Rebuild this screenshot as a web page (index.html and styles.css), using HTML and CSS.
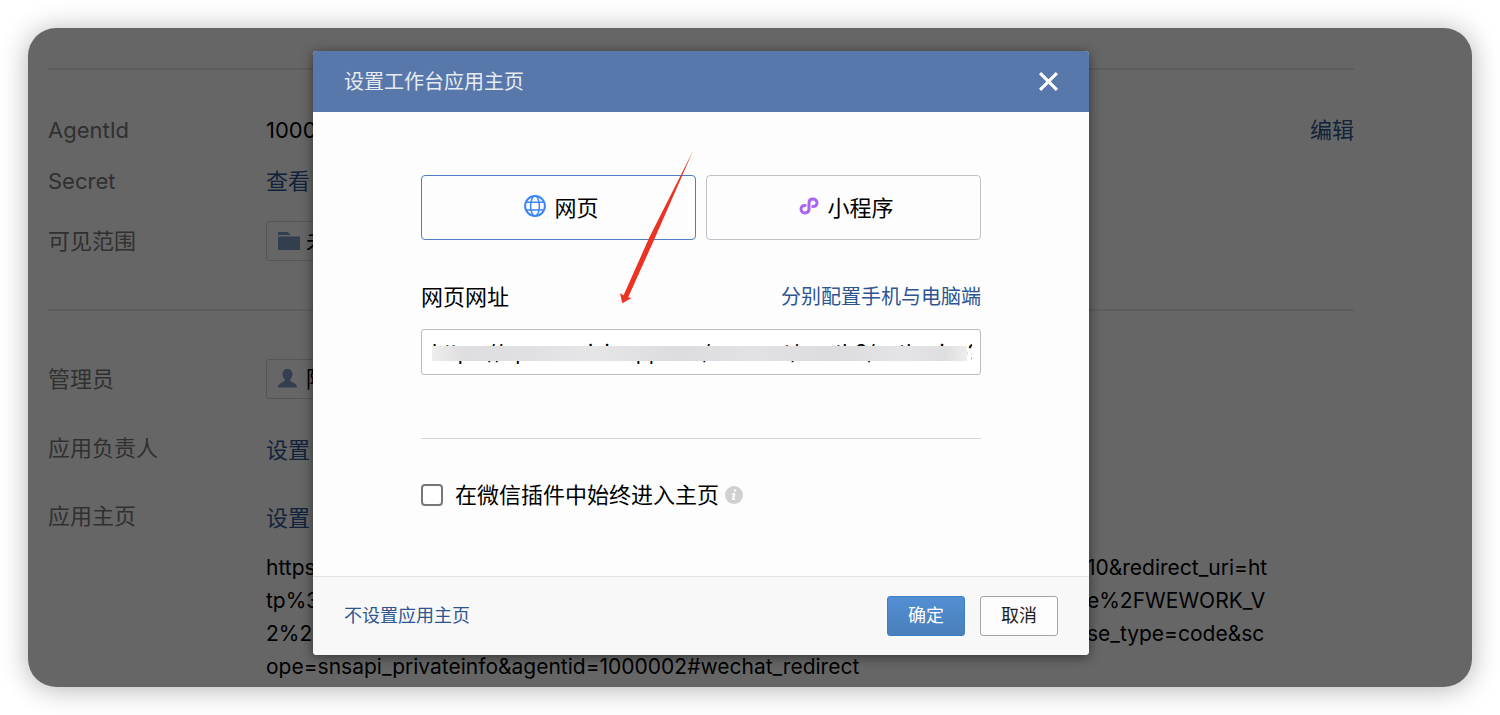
FILE: index.html
```html
<!DOCTYPE html>
<html lang="zh-CN">
<head>
<meta charset="utf-8">
<title>设置工作台应用主页</title>
<link rel="stylesheet" href="styles.css">
</head>
<body>
<div class="window">
  <main class="page">
    <section class="section section-basic">
      <div class="row">
        <span class="label">AgentId</span>
        <span class="value">1000002</span>
        <a class="link" href="#edit">编辑</a>
      </div>
      <div class="row row-secret">
        <span class="label">Secret</span>
        <a class="link" href="#secret">查看</a>
      </div>
      <div class="row row-scope">
        <span class="label">可见范围</span>
        <span class="chip">
          <svg class="chip-icon" viewBox="0 0 24 24" aria-hidden="true"><path d="M1 3h10l2.500 3H1zM1 7.500h22V21H1z"/></svg>
          未
        </span>
      </div>
    </section>
    <section class="section section-admin">
      <div class="row">
        <span class="label">管理员</span>
        <span class="chip">
          <svg class="chip-icon" viewBox="0 0 24 24" aria-hidden="true"><path d="M10.500 2c3 0 5 2 5 5 0 2-.8 3.800-2 5.200-.5.600-.3 1.800.5 2.200 2.500 1.200 6 2 6 6.100H1c0-4.100 3.500-4.900 6-6.100.8-.4 1-1.600.5-2.200-1.200-1.400-2-3.200-2-5.200 0-3 2-5 5-5z"/></svg>
          陈
        </span>
      </div>
      <div class="row row-owner">
        <span class="label">应用负责人</span>
        <a class="link" href="#owner">设置</a>
      </div>
      <div class="row row-home">
        <span class="label">应用主页</span>
        <a class="link" href="#home">设置</a>
      </div>
      <div class="url">
        <div class="url-line"><span>https</span><span>10&amp;redirect_uri=ht</span></div>
        <div class="url-line"><span>tp%3</span><span>e%2FWEWORK_V</span></div>
        <div class="url-line"><span>2%2</span><span>se_type=code&amp;sc</span></div>
        <div class="url-line"><span>ope=snsapi_privateinfo&amp;agentid=1000002#wechat_redirect</span></div>
      </div>
    </section>
  </main>

  <div class="mask">
    <div class="dialog" role="dialog" aria-labelledby="dialog-title">
      <header class="dialog-head">
        <h1 class="dialog-title" id="dialog-title">设置工作台应用主页</h1>
        <button class="close" type="button" aria-label="关闭">
          <svg viewBox="0 0 20 20" aria-hidden="true"><path d="M2 2l16 16M18 2L2 18"/></svg>
        </button>
      </header>
      <div class="dialog-body">
        <div class="choices">
          <button class="choice choice-active" type="button">
            <svg class="choice-icon icon-globe" viewBox="0 0 22 22" aria-hidden="true"><circle cx="11" cy="11" r="9.900" stroke-width="2"/><ellipse cx="11" cy="11" rx="4.400" ry="9.900"/><path d="M2 7.300h18M2 14.900h18"/></svg>
            网页
          </button>
          <button class="choice" type="button">
            <svg class="choice-icon icon-mini" viewBox="0 0 20 20" aria-hidden="true"><path d="M6.200 9.400C3.600 9.200 2 11 2 13.200c0 2.100 1.600 3.700 4 3.700 2.300 0 4-1.500 4-3.900V7c0-2.400 1.700-3.900 4-3.900 2.400 0 4 1.600 4 3.700 0 2.200-1.600 3.900-4.200 3.800"/></svg>
            小程序
          </button>
        </div>
        <div class="field-head">
          <label for="home-url">网页网址</label>
          <a class="split-link" href="#split">分别配置手机与电脑端</a>
        </div>
        <div class="field">
          <input class="url-input" id="home-url" type="text" value="https://open.weixin.qq.com/connect/oauth2/authorize?">
          <span class="redaction"></span>
        </div>
        <div class="plugin">
          <input class="check" id="plugin" type="checkbox">
          <label for="plugin">在微信插件中始终进入主页</label>
          <svg class="icon-info" viewBox="0 0 20 20" aria-hidden="true"><circle cx="10" cy="10" r="10"/><path d="M10.200 3.800h2.300l-.5 2.400H9.700zM7.800 8h3.800l-1.400 6h1.300l-.3 1.600H7.500l1.500-6H7.400z"/></svg>
        </div>
      </div>
      <footer class="dialog-foot">
        <a class="unset" href="#unset">不设置应用主页</a>
        <div class="actions">
          <button class="btn btn-primary" type="button">确定</button>
          <button class="btn" type="button">取消</button>
        </div>
      </footer>
      <svg class="pointer" viewBox="0 0 80 160" aria-hidden="true"><path d="M77 3L38 92 12.200 149.300 15.500 150 6.300 155.300 4 145.300 7.600 147.300 33.500 89z"/></svg>
    </div>
  </div>
</div>
</body>
</html>
```

FILE: styles.css
```css
* {
  box-sizing: border-box;
}

body {
  margin: 0;
  padding: 28px;
  background: #fff;
  color: #000;
  font: 22px/32px Inter, "Noto Sans CJK SC", sans-serif;
}

a {
  color: #2c5591;
  text-decoration: none;
}

button,
input {
  font: inherit;
}

.window {
  position: relative;
  min-height: calc(100vh - 56px);
  overflow: hidden;
  border-radius: 28px;
  background: #fff;
  box-shadow: 0 2px 28px rgba(0, 0, 0, 0.3);
}

.page {
  padding: 40px 118px 0 20px;
}

.section {
  border-top: 2px solid #e8e8e8;
}

.section-basic {
  padding: 44px 0 48px;
}

.section-admin {
  padding-top: 48px;
}

.row {
  display: grid;
  grid-template-columns: 218px 1fr auto;
  align-items: center;
}

.row-secret {
  margin-top: 19px;
}

.row-scope {
  margin-top: 24px;
}

.row-owner {
  margin-top: 35px;
}

.row-home {
  margin-top: 36px;
}

.row-owner .label,
.row-home .label {
  line-height: 28px;
  padding-bottom: 4px;
}

.label {
  color: #787878;
}

.chip {
  display: flex;
  align-items: center;
  gap: 5px;
  width: 160px;
  height: 40px;
  padding: 0 10px;
  border: 1px solid #d2d4da;
  border-radius: 3px;
}

.chip-icon {
  width: 24px;
  height: 24px;
  fill: #7f9cc6;
}

.url {
  margin: 17px 0 0 218px;
  font-size: 21px;
  line-height: 33px;
}

.url-line {
  display: grid;
  grid-template-columns: 821px auto;
  white-space: nowrap;
}

.mask {
  position: absolute;
  inset: 0;
  display: flex;
  justify-content: center;
  align-items: flex-start;
  padding: 23px 98px 0 0;
  background: rgba(0, 0, 0, 0.6);
}

.dialog {
  position: relative;
  width: 776px;
  max-width: 100%;
  border-radius: 4px;
  background: #fff;
  box-shadow: 0 2px 12px rgba(0, 0, 0, 0.5);
}

.dialog-head {
  display: flex;
  justify-content: space-between;
  align-items: center;
  height: 61px;
  padding: 0 30px 0 31px;
  border-radius: 4px 4px 0 0;
  background: #5878ab;
  color: #fff;
}

.dialog-title {
  margin: 0;
  color: #e6ebf2;
  font-size: 20px;
  font-weight: 400;
}

.close {
  display: flex;
  padding: 0;
  border: 0;
  background: none;
}

.close svg {
  width: 21px;
  height: 21px;
  fill: none;
  stroke: #fff;
  stroke-width: 3;
}

.dialog-body {
  padding: 63px 108px 65px;
  background: #fdfdfd;
}

.choices {
  display: grid;
  grid-template-columns: 1fr 1fr;
  gap: 10px;
}

.choice {
  display: flex;
  justify-content: center;
  align-items: center;
  gap: 8px;
  height: 65px;
  padding: 0 0 0 6px;
  border: 1px solid #c0c2ca;
  border-radius: 4px;
  background: #fdfdfd;
  color: #000;
}

.choice-active {
  border-color: #4f7dc4;
}

.choice-icon {
  margin-bottom: 3px;
  fill: none;
}

.icon-globe {
  width: 22px;
  height: 22px;
  stroke: #3c87f5;
  stroke-width: 1.5;
}

.icon-mini {
  width: 20px;
  height: 20px;
  stroke: #a964f0;
  stroke-width: 3;
  stroke-linecap: round;
}

.field-head {
  display: flex;
  justify-content: space-between;
  align-items: center;
  margin-top: 41px;
}

.split-link {
  font-size: 20px;
}

.field {
  position: relative;
  margin-top: 16px;
}

.url-input {
  display: block;
  width: 100%;
  height: 46px;
  padding: 0 8px 0 10px;
  border: 1px solid #b9bbc3;
  border-radius: 3px;
  background: #fff;
  color: #000;
  font-size: 21px;
}

.redaction {
  position: absolute;
  top: 17px;
  right: 14px;
  left: 11px;
  height: 15px;
  background: linear-gradient(90deg, #eee, #dedee0 6%, #e0e0e2 18%, #e6e6e8 30%, #dcdcde 46%, #e2e2e4 60%, #dcdcde 75%, #e4e4e6 88%, #dedee0 96%, #eee);
}

.plugin {
  display: flex;
  align-items: center;
  margin-top: 63px;
  padding-top: 40px;
  border-top: 1px solid #d6d6d8;
}

.check {
  appearance: none;
  width: 22px;
  height: 22px;
  margin: 0 12px 0 0;
  border: 2px solid #77777b;
  border-radius: 4px;
  background: #fff;
}

.icon-info {
  width: 18px;
  height: 18px;
  margin-left: 6px;
  fill: #d0d0d2;
}

.icon-info path {
  fill: #fff;
}

.dialog-foot {
  display: flex;
  justify-content: space-between;
  align-items: center;
  height: 79px;
  padding: 0 31px;
  border-top: 1px solid #dfe3ea;
  border-radius: 0 0 4px 4px;
  background: #f8f8f9;
}

.unset {
  font-size: 18px;
}

.actions {
  display: flex;
  gap: 15px;
}

.btn {
  width: 78px;
  height: 40px;
  padding: 0;
  border: 1px solid #a6a6aa;
  border-radius: 3px;
  background: #fdfdfd;
  color: #222;
  font-size: 18px;
}

.btn-primary {
  border-color: #3f7fc8;
  background: linear-gradient(#528fd3, #4a7fb9);
  color: #fff;
}

.pointer {
  position: absolute;
  top: 97px;
  left: 303px;
  width: 80px;
  height: 160px;
  fill: #ec3323;
  pointer-events: none;
}
```
